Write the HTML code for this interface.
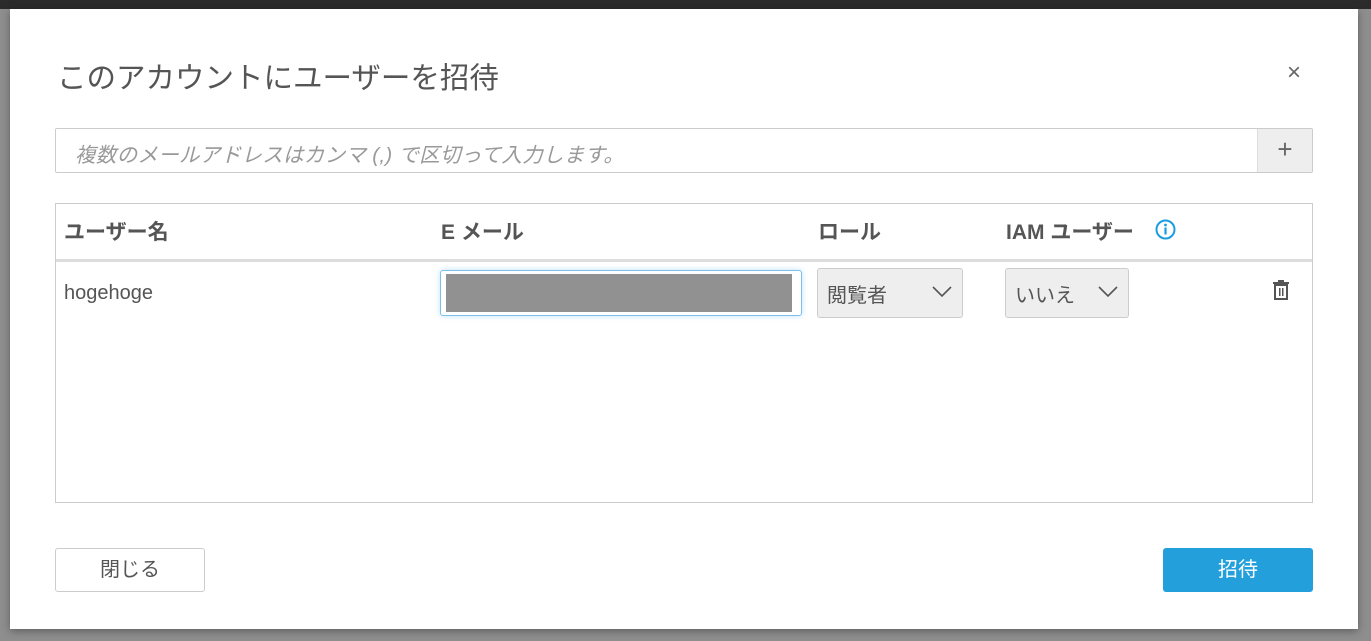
<!DOCTYPE html>
<html><head><meta charset="utf-8"><style>
*{box-sizing:border-box;margin:0;padding:0}
body{width:1371px;height:641px;overflow:hidden;background:#8e8e8e;font-family:"Liberation Sans","Noto Sans CJK JP",sans-serif;color:#545b64;position:relative}
.topbar{position:absolute;left:0;top:0;width:1371px;height:9px;background:#2b2b2b}
.modal{position:absolute;left:10px;top:9px;width:1348px;height:620px;background:#fff;box-shadow:0 2px 8px rgba(0,0,0,.35)}
.abs{position:absolute}
h1{position:absolute;left:47px;top:46px;font-size:29.5px;font-weight:400;color:#555;white-space:nowrap}
.close{left:1277px;top:50px;font-size:24px;color:#666;font-weight:300}
.input{left:45px;top:119px;width:1258px;height:45px;border:1px solid #ccc;border-radius:2px}
.input span{position:absolute;left:19px;top:9px;font-size:20.5px;letter-spacing:0.3px;font-style:italic;color:#999;white-space:nowrap}
.plus{position:absolute;right:0;top:0;width:55px;height:43px;background:#eee;border-left:1px solid #ddd;text-align:center;line-height:41px;font-size:26px;color:#666}
.table{left:45px;top:194px;width:1258px;height:300px;border:1px solid #ccc}
.th{position:absolute;top:12px;font-size:21px;font-weight:700;color:#555;white-space:nowrap}
.sep{position:absolute;left:0;top:55px;width:100%;height:3px;background:#ddd}
.td{position:absolute;font-size:20px;color:#555}
.email{position:absolute;left:384px;top:66px;width:362px;height:46px;border:1px solid #7cc0ec;border-radius:3px;box-shadow:0 0 6px rgba(100,180,240,.4)}
.email div{position:absolute;left:5px;top:3px;width:346px;height:38px;background:#919191}
.sel{position:absolute;top:64px;height:50px;background:#eee;border:1px solid #ccc;border-radius:3px;font-size:20px;color:#555}
.sel span{position:absolute;left:9px;top:10px}
.sel svg{position:absolute;right:10px;top:17px}
.btn{position:absolute;top:539px;height:44px;border-radius:3px;font-size:20px;text-align:center;line-height:44px}
</style></head><body>
<div class="topbar"></div>
<div class="modal">
<h1>このアカウントにユーザーを招待</h1>
<div class="abs close">×</div>
<div class="abs input"><span>複数のメールアドレスはカンマ (,) で区切って入力します。</span><div class="plus">+</div></div>
<div class="abs table">
<div class="th" style="left:8px">ユーザー名</div>
<div class="th" style="left:385px">E メール</div>
<div class="th" style="left:762px">ロール</div>
<div class="th" style="left:950px">IAM ユーザー</div>
<svg class="abs" style="left:1099px;top:15px" width="21" height="21" viewBox="0 0 21 21"><circle cx="10.5" cy="10.5" r="9" fill="none" stroke="#1a9de0" stroke-width="2"/><circle cx="10.5" cy="6" r="1.4" fill="#1a9de0"/><rect x="9.4" y="8.5" width="2.2" height="7" fill="#1a9de0"/></svg>
<div class="sep"></div>
<div class="td" style="left:8px;top:78px">hogehoge</div>
<div class="email"><div></div></div>
<div class="sel" style="left:761px;width:146px"><span>閲覧者</span><svg width="20" height="12" viewBox="0 0 20 12"><path d="M1 1l9 9 9-9" fill="none" stroke="#555" stroke-width="1.6"/></svg></div>
<div class="sel" style="left:949px;width:124px"><span>いいえ</span><svg width="20" height="12" viewBox="0 0 20 12"><path d="M1 1l9 9 9-9" fill="none" stroke="#555" stroke-width="1.6"/></svg></div>
<svg class="abs" style="left:1216px;top:76px" width="18" height="20" viewBox="0 0 18 20"><rect x="1" y="2" width="16" height="2" fill="#555"/><rect x="6" y="0" width="6" height="2" fill="#555"/><path d="M3 5h12v14H3z" fill="none" stroke="#555" stroke-width="2"/><rect x="7" y="8" width="1.5" height="8" fill="#555"/><rect x="10" y="8" width="1.5" height="8" fill="#555"/></svg>
</div>
<div class="btn" style="left:45px;width:150px;border:1px solid #ccc;color:#555;background:#fff;line-height:42px">閉じる</div>
<div class="btn" style="left:1153px;width:150px;background:#23a0dc;color:#fff">招待</div>
</div>
</body></html>
